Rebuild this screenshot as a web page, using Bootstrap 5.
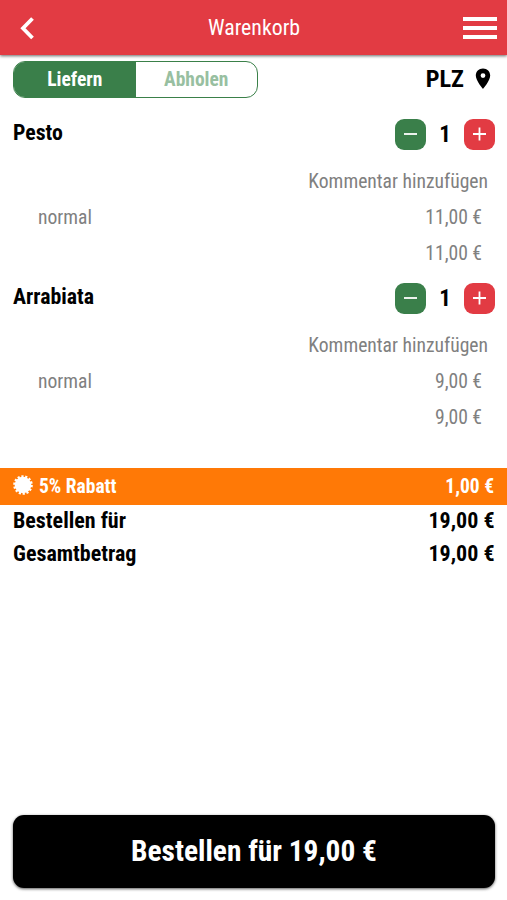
<!DOCTYPE html>
<html lang="de">
<head>
<meta charset="utf-8">
<meta name="viewport" content="width=device-width, initial-scale=1">
<title>Warenkorb</title>
<link href="https://cdn.jsdelivr.net/npm/bootstrap@5.3.0/dist/css/bootstrap.min.css" rel="stylesheet">
<style>
body{font-family:"Roboto Condensed",Roboto,"Liberation Sans",sans-serif;font-stretch:75%;font-size:20px;line-height:1.2;color:#000;height:900px;overflow:hidden}
svg{display:block;flex:none}
.topbar{height:55px;background:#e23b43;box-shadow:0 1px 3px rgba(0,0,0,.6);padding:0 10px 0 18px}
.title{padding-top:2px;font-size:21.8px;font-weight:450}
.back{width:29px}
.menu{width:36px}
.mode-row{height:48px;padding:6px 14px 0 13px}
.mode{width:245px;height:37px;border:1.5px solid #3a8049;border-radius:12px;overflow:hidden;font-size:19.5px}
.mode-on{background:#3a7f4a;color:#fff}
.mode-off{color:#98bfa1}
.plz{font-size:24.3px;padding-top:3px}
.pin{margin-left:9px}
.dish{height:164px;padding:0 12px 0 13px}
.dish-head{height:62px;font-size:21.8px}
.dish-name{margin-top:-2px}
.step{width:31px;height:31px;border-radius:9px}
.minus{background:#3a7f4a}
.plus{background:#e23b43}
.qty{width:38px;font-size:23px;padding-top:1px}
.line{height:36px;color:#808080;font-size:19.6px;font-weight:430}
.note{padding-right:7px;margin-top:-1px}
.part{padding:0 13px 0 25px}
.promo{height:37px;background:#ff7906;font-size:19.5px;margin-top:37px;padding:0 13px}
.promo-text{padding-left:6px}
.sum{height:33px;font-size:22px;padding:0 12.5px 0 13px}
.order{height:73px;border-radius:11px;background:#000;margin:0 12px 12px 13px;font-size:29.4px;box-shadow:0 1px 3px rgba(0,0,0,.65)}
.order:hover{background:#000}
</style>
<script src="https://cdn.jsdelivr.net/npm/bootstrap@5.3.0/dist/js/bootstrap.bundle.min.js"></script>
</head>
<body class="d-flex flex-column bg-white">
<header class="topbar d-flex align-items-center justify-content-between text-white flex-shrink-0">
  <div class="back"><svg width="20" height="24" viewBox="0 0 20 24" fill="none" stroke="#fff" stroke-width="3.8"><path d="M14.500 2.500 5 12.300 14.500 22"/></svg></div>
  <div class="title">Warenkorb</div>
  <div class="menu"><svg width="36" height="24" viewBox="0 0 36 24" fill="#fff"><path d="M2 1h34v4H2zM2 10h34v4H2zM2 19h34v4H2z"/></svg></div>
</header>
<div class="mode-row d-flex justify-content-between align-items-start flex-shrink-0">
  <div class="mode d-flex fw-bold">
    <div class="mode-on w-50 d-flex align-items-center justify-content-center">Liefern</div>
    <div class="mode-off w-50 d-flex align-items-center justify-content-center">Abholen</div>
  </div>
  <div class="plz fw-bold d-flex align-items-center">PLZ
    <svg class="pin" width="20" height="22" viewBox="0 0 20 22"><path fill="#000" fill-rule="evenodd" d="M10 .5C5.800.5 2.800 3.600 2.800 7.600 2.800 12.800 10 21 10 21s7.200-8.200 7.200-13.400C17.200 3.600 14.200.5 10 .5zm0 4.700a2.400 2.400 0 1 1 0 4.800 2.400 2.400 0 0 1 0-4.800z"/></svg>
  </div>
</div>
<section class="dish flex-shrink-0">
  <div class="dish-head d-flex align-items-center justify-content-between fw-bold">
    <div class="dish-name">Pesto</div>
    <div class="d-flex align-items-center">
      <div class="step minus"><svg width="31" height="31" stroke="#fff" stroke-width="1.8"><path d="M9 15h13"/></svg></div>
      <div class="qty text-center">1</div>
      <div class="step plus"><svg width="31" height="31" stroke="#fff" stroke-width="1.8"><path d="M9 15h13M15.500 8.500v13"/></svg></div>
    </div>
  </div>
  <div class="line note d-flex align-items-center justify-content-end">Kommentar hinzufügen</div>
  <div class="line part d-flex align-items-center justify-content-between"><span>normal</span><span>11,00 €</span></div>
  <div class="line part d-flex align-items-center justify-content-end">11,00 €</div>
</section>
<section class="dish flex-shrink-0">
  <div class="dish-head d-flex align-items-center justify-content-between fw-bold">
    <div class="dish-name">Arrabiata</div>
    <div class="d-flex align-items-center">
      <div class="step minus"><svg width="31" height="31" stroke="#fff" stroke-width="1.8"><path d="M9 15h13"/></svg></div>
      <div class="qty text-center">1</div>
      <div class="step plus"><svg width="31" height="31" stroke="#fff" stroke-width="1.8"><path d="M9 15h13M15.500 8.500v13"/></svg></div>
    </div>
  </div>
  <div class="line note d-flex align-items-center justify-content-end">Kommentar hinzufügen</div>
  <div class="line part d-flex align-items-center justify-content-between"><span>normal</span><span>9,00 €</span></div>
  <div class="line part d-flex align-items-center justify-content-end">9,00 €</div>
</section>
<div class="promo d-flex align-items-center text-white fw-bold flex-shrink-0">
  <svg class="mb-1" width="20" height="20" viewBox="-10 -10 20 20"><circle r="8.300" fill="#fff"/><circle r="8.600" fill="none" stroke="#fff" stroke-width="2.400" stroke-dasharray="2.200 1.660"/></svg>
  <span class="promo-text">5% Rabatt</span><span class="ms-auto">1,00 €</span>
</div>
<div class="sum d-flex align-items-center justify-content-between fw-bold flex-shrink-0"><span>Bestellen für</span><span>19,00 €</span></div>
<div class="sum d-flex align-items-center justify-content-between fw-bold flex-shrink-0"><span>Gesamtbetrag</span><span>19,00 €</span></div>
<button class="order btn text-white fw-bold mt-auto flex-shrink-0 border-0">Bestellen für 19,00 €</button>
</body>
</html>
